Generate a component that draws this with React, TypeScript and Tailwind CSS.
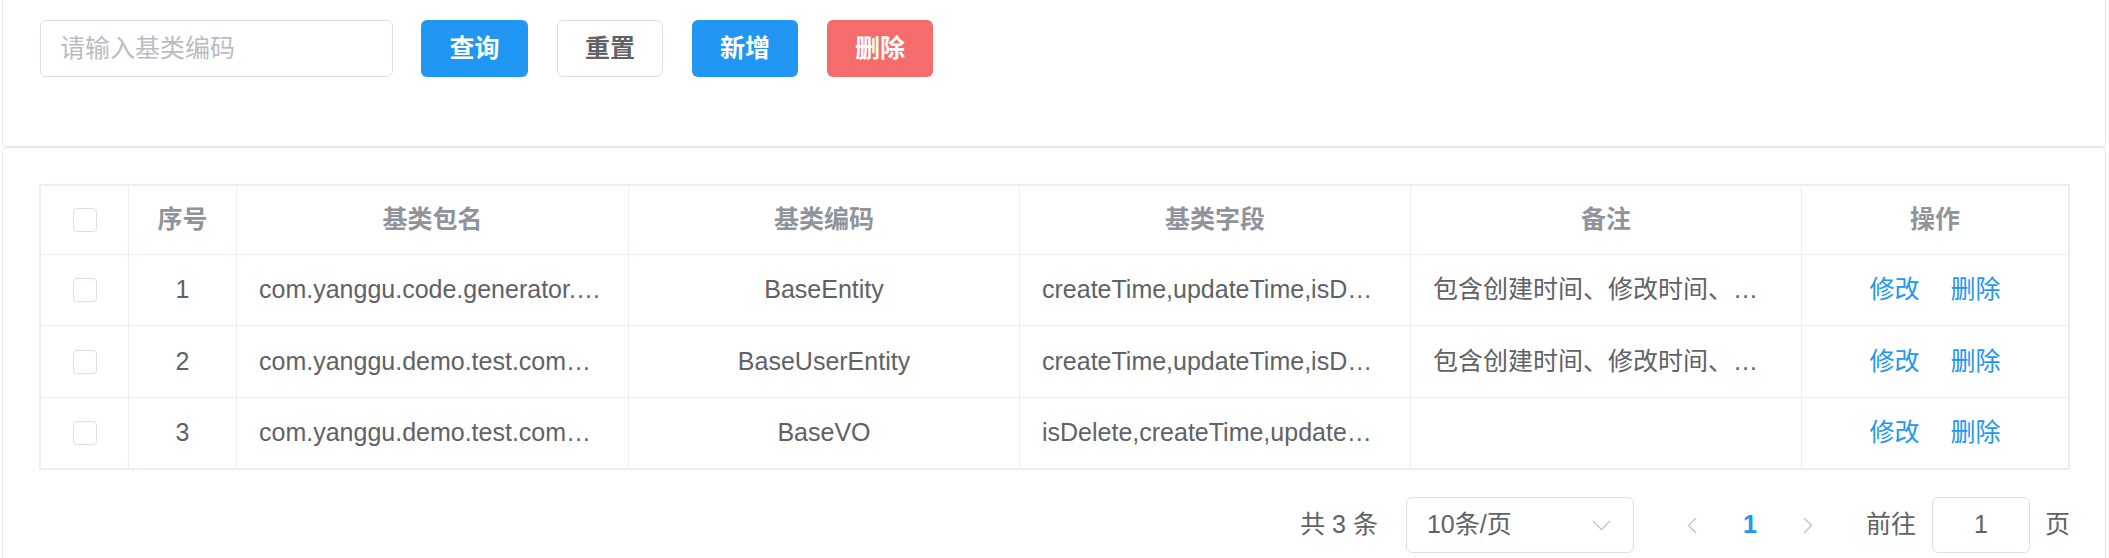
import React from "react";

const rows = [
  {
    no: 1,
    pkg: "com.yanggu.code.generator.entity.BaseEntity",
    code: "BaseEntity",
    fields: "createTime,updateTime,isDelete",
    remark: "包含创建时间、修改时间、逻辑删除字段",
    h: "h-[71px]",
  },
  {
    no: 2,
    pkg: "com.yanggu.demo.test.common.BaseUserEntity",
    code: "BaseUserEntity",
    fields: "createTime,updateTime,isDelete,createUser,updateUser",
    remark: "包含创建时间、修改时间、逻辑删除、创建人、修改人字段",
    h: "h-[72px]",
  },
  {
    no: 3,
    pkg: "com.yanggu.demo.test.common.BaseVO",
    code: "BaseVO",
    fields: "isDelete,createTime,updateTime",
    remark: "",
    h: "h-[70px]",
  },
];

const GRID = "grid grid-cols-[88px_108px_392px_391px_391px_391px_266px]";

function Checkbox() {
  return <span className="block w-[24px] h-[24px] rounded-[4px] border border-[#dcdfe6] bg-white" />;
}

export default function App() {
  return (
    <div className="w-[2109px] h-[558px] overflow-hidden bg-white font-['Liberation_Sans','Noto_Sans_CJK_SC',sans-serif] text-[25px] text-[#606266]">
      {/* Search card */}
      <div className="ml-[2px] mr-[3px] h-[147px] border-x border-b border-[#e4e7ed] rounded-b-[5px] pt-[20px] pl-[37px] flex items-start">
        <input
          className="w-[353px] h-[57px] rounded-[6px] border border-[#dcdfe6] px-[19px] outline-none text-[25px] text-[#606266] placeholder:text-[#b9bcc3] bg-white"
          placeholder="请输入基类编码"
        />
        <button className="ml-[28px] w-[107px] h-[57px] rounded-[6px] bg-[#2196f3] text-white font-semibold flex items-center justify-center">
          查询
        </button>
        <button className="ml-[29px] w-[106px] h-[57px] rounded-[6px] border border-[#dcdfe6] bg-white text-[#606266] font-semibold flex items-center justify-center">
          重置
        </button>
        <button className="ml-[29px] w-[106px] h-[57px] rounded-[6px] bg-[#2196f3] text-white font-semibold flex items-center justify-center">
          新增
        </button>
        <button className="ml-[29px] w-[106px] h-[57px] rounded-[6px] bg-[#f56c6c] text-white font-semibold flex items-center justify-center">
          删除
        </button>
      </div>

      {/* Table card */}
      <div className="ml-[2px] mr-[3px] h-[420px] border-x border-t border-[#e4e7ed] rounded-t-[5px] pt-[36px] pl-[36px]">
        <div className="w-[2031px] border-2 border-[#ebeef5]">
          {/* Header */}
          <div className={`${GRID} h-[69px] border-b border-[#ebeef5] text-[#909399] font-bold`}>
            <div className="border-r border-[#ebeef5] flex items-center justify-center">
              <Checkbox />
            </div>
            <div className="border-r border-[#ebeef5] flex items-center justify-center">序号</div>
            <div className="border-r border-[#ebeef5] flex items-center justify-center">基类包名</div>
            <div className="border-r border-[#ebeef5] flex items-center justify-center">基类编码</div>
            <div className="border-r border-[#ebeef5] flex items-center justify-center">基类字段</div>
            <div className="border-r border-[#ebeef5] flex items-center justify-center">备注</div>
            <div className="flex items-center justify-center">操作</div>
          </div>
          {/* Body */}
          {rows.map((r, i) => (
            <div
              key={r.no}
              className={`${GRID} ${r.h} ${i < rows.length - 1 ? "border-b border-[#ebeef5]" : ""}`}
            >
              <div className="border-r border-[#ebeef5] flex items-center justify-center">
                <Checkbox />
              </div>
              <div className="border-r border-[#ebeef5] flex items-center justify-center">{r.no}</div>
              <div className="border-r border-[#ebeef5] flex items-center pl-[22px] pr-[24px] min-w-0">
                <span className="block w-full truncate">{r.pkg}</span>
              </div>
              <div className="border-r border-[#ebeef5] flex items-center justify-center px-[23px] min-w-0">
                <span className="truncate">{r.code}</span>
              </div>
              <div className="border-r border-[#ebeef5] flex items-center pl-[22px] pr-[24px] min-w-0">
                <span className="block w-full truncate">{r.fields}</span>
              </div>
              <div className="border-r border-[#ebeef5] flex items-center pl-[22px] pr-[24px] min-w-0">
                <span className="block w-full truncate">{r.remark}</span>
              </div>
              <div className="flex items-center justify-center gap-[31px] text-[#2196f3]">
                <span>修改</span>
                <span>删除</span>
              </div>
            </div>
          ))}
        </div>

        {/* Pagination */}
        <div className="w-[2031px] mt-[27px] flex items-center justify-end">
          <span className="whitespace-pre">共 3 条</span>
          <div className="ml-[28px] w-[228px] h-[56px] rounded-[6px] border border-[#dcdfe6] flex items-center justify-between pl-[20px] pr-[22px]">
            <span>10条/页</span>
            <svg width="19" height="11" viewBox="0 0 19 11" fill="none">
              <polyline points="1,1 9.5,9.5 18,1" stroke="#c0c4cc" strokeWidth="1.4" />
            </svg>
          </div>
          <div className="ml-[32px] w-[52px] h-[56px] flex items-center justify-center">
            <svg width="10" height="17" viewBox="0 0 10 17" fill="none">
              <polyline points="9,1 1.5,8.5 9,16" stroke="#c0c4cc" strokeWidth="1.4" />
            </svg>
          </div>
          <div className="ml-[6px] w-[52px] h-[56px] flex items-center justify-center font-bold text-[#2196f3]">1</div>
          <div className="ml-[6px] w-[52px] h-[56px] flex items-center justify-center">
            <svg width="10" height="17" viewBox="0 0 10 17" fill="none">
              <polyline points="1,1 8.5,8.5 1,16" stroke="#c0c4cc" strokeWidth="1.4" />
            </svg>
          </div>
          <span className="ml-[32px]">前往</span>
          <div className="ml-[16px] w-[98px] h-[56px] rounded-[6px] border border-[#dcdfe6] flex items-center justify-center">
            1
          </div>
          <span className="ml-[15px]">页</span>
        </div>
      </div>
    </div>
  );
}
